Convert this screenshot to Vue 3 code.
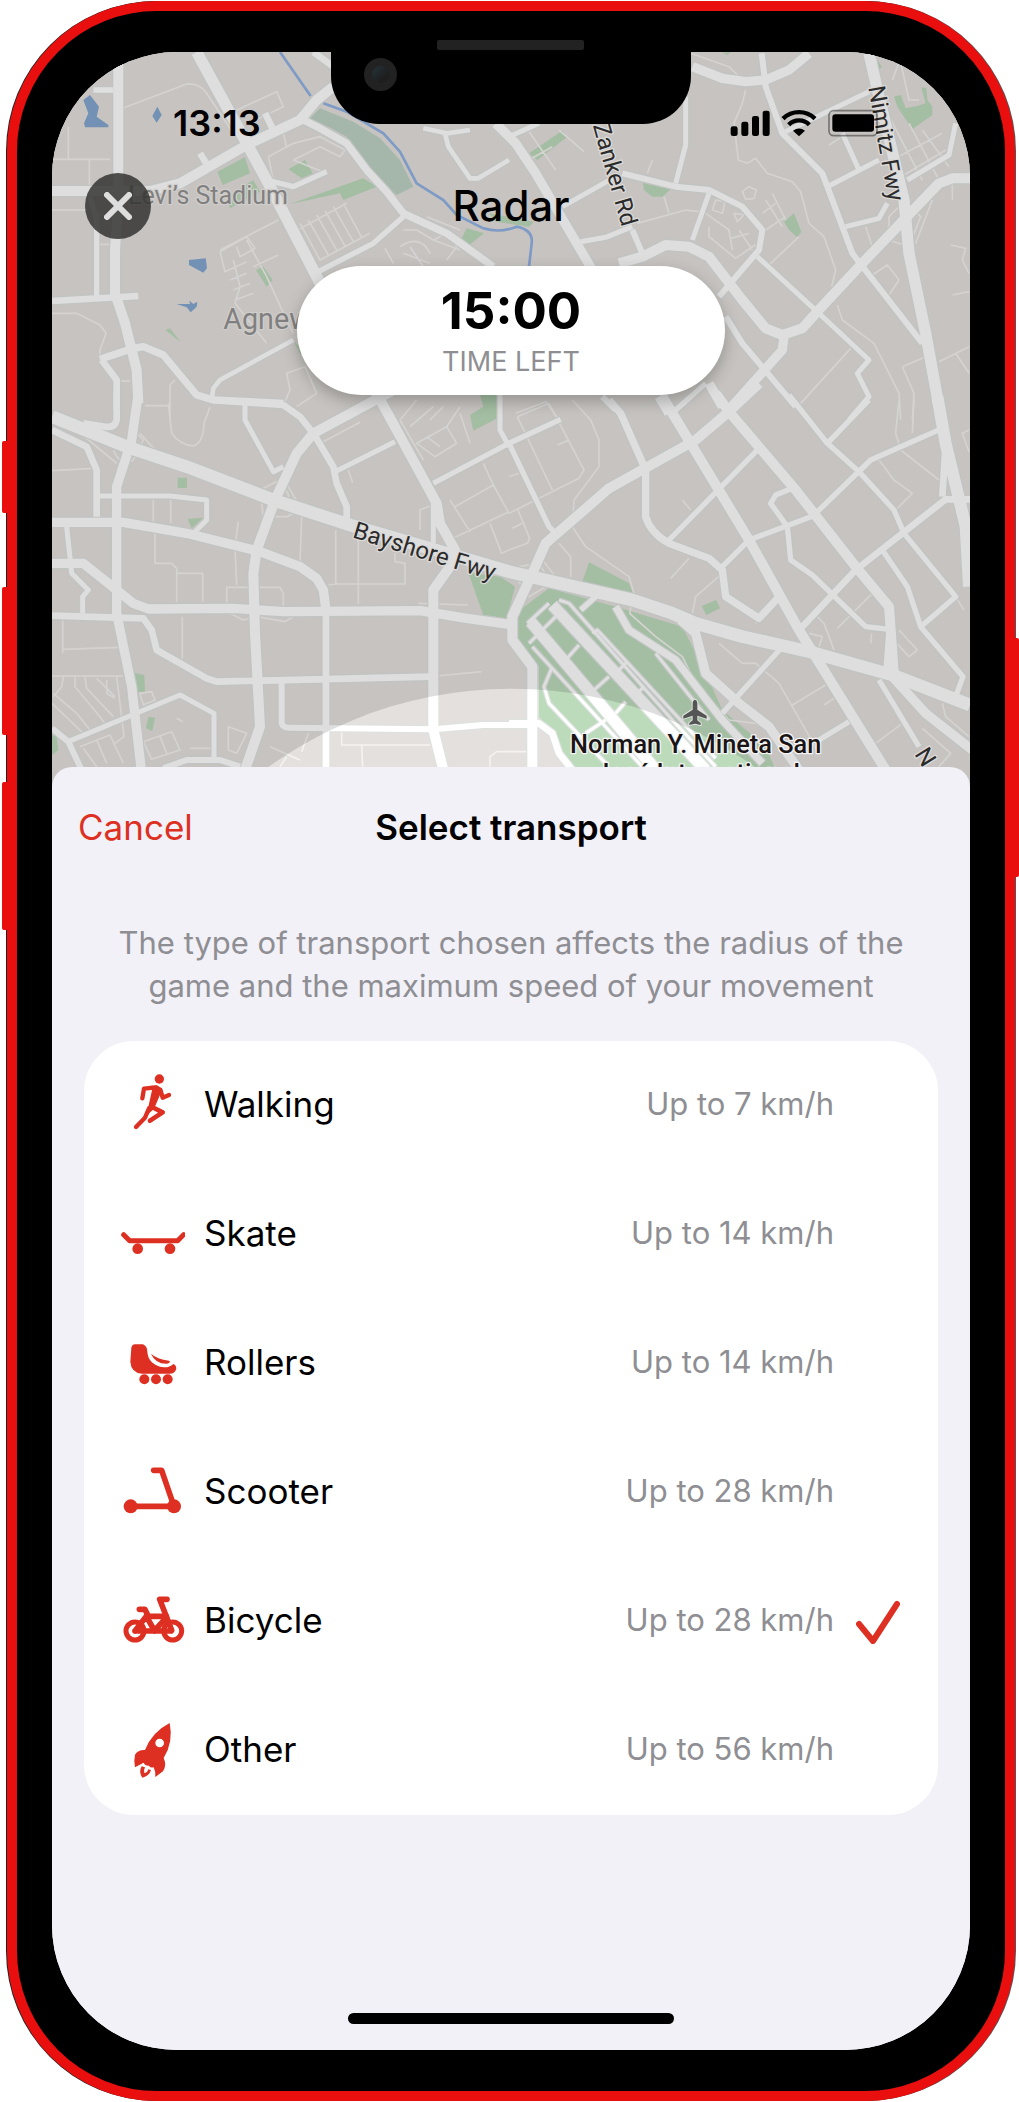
<script setup>
import { ref } from 'vue'

const selected = ref('bicycle')

const transports = [
  { id: 'walking', name: 'Walking', speed: 'Up to 7 km/h', box: '56 72 198 198' },
  { id: 'skate', name: 'Skate', speed: 'Up to 14 km/h', box: '56 457 198 198' },
  { id: 'rollers', name: 'Rollers', speed: 'Up to 14 km/h', box: '56 843 198 198' },
  { id: 'scooter', name: 'Scooter', speed: 'Up to 28 km/h', box: '56 88 198 198' },
  { id: 'bicycle', name: 'Bicycle', speed: 'Up to 28 km/h', box: '56 474 198 198' },
  { id: 'other', name: 'Other', speed: 'Up to 56 km/h', box: '56 858 198 198' },
]

// The map is kept in four tiles; roads are [width, path] pairs.
const tiles = [
  {
    at: 'translate(0 0)',
    parks: 'M652 515L735 472L750 520L668 555ZM865 508L915 480L938 520L905 535ZM680 590L760 540L780 575L690 625ZM870 612L1090 535L1130 560L1030 600L1020 580ZM768 810L790 800L818 840L800 860ZM497 990L510 985L542 1027ZM1385 715L1400 685L1452 700L1408 735ZM882 1025L910 1050L902 1066Z',
    minor: 'M205 380V478M156 478H330M268 478V560M156 630H260M372 323L560 252Q600 250 620 280L700 400M700 335L830 275L850 320L745 370M156 940H230L300 975L318 1000L300 1050V1070M660 755L740 710L765 745L720 770L710 740M660 755L675 815L740 785M690 840L740 820M700 870L750 850M705 900L760 880M740 720L800 830L860 960L880 1000M700 780L720 860L705 910L800 1030M760 800L835 765M660 750L835 660M875 700L1040 610M900 670L960 780L1110 700M925 660L985 765M950 645L1010 750M975 632L1035 738M1000 620L1060 725M1030 610L1085 712M865 680L920 770M805 470L880 430L960 410L1035 450L1020 470L960 440L880 480M805 470L820 540M850 400L860 440M880 480L980 520M1155 745L1180 790M1210 690L1250 690L1300 720L1380 750M1200 740Q1260 700 1290 760M1210 760L1290 790M1230 740L1270 800M1300 720L1340 700L1370 740L1340 780M1280 650L1380 690M510 1260V1155L525 1140M360 1143H390M435 1217H510M860 1120L915 1100L950 1180L890 1220M860 1120L870 1170L855 1205M300 733H330',
    roads: [
      [32, 'M590 156L740 430L800 540L945 820L1140 1200'],
      [28, 'M355 190V600L345 750V880L375 970L410 1110L415 1210'],
      [28, 'M156 573H450L540 550L740 435L900 360L950 300L1000 260'],
      [20, 'M900 355L960 385L1040 430L1100 510L1160 575L1210 640L1340 700L1480 800'],
      [14, 'M1210 650L1120 730L945 820M800 540L880 560L980 515M280 270H340M290 640V900M270 590L290 660'],
      [18, 'M940 156L1000 200M600 460L625 500M795 340L820 390M156 903L415 888M305 1080L350 1140V1230'],
      [20, 'M300 1078L400 1045L430 1040L490 1065L590 1185L640 1200L850 1210'],
      [12, 'M880 1020L660 1140L640 1165L635 1200M1270 385L1340 400L1410 390M1335 400L1345 440L1410 535H1435L1527 480'],
    ],
  },
  {
    at: 'translate(1527 0)',
    parks: 'M60 460L160 392L175 410L85 480ZM402 548L485 568L460 590H430L405 570ZM825 665L855 640L877 695L865 712L840 690ZM1155 290L1175 285L1190 325L1225 318L1250 310L1237 262L1252 265L1255 300L1270 320V345L1210 388L1165 320ZM-60 640L75 665L60 680L-40 665ZM1105 180L1118 200L1110 210ZM640 158L665 156L655 165Z',
    minor: 'M710 270L700 310L675 370L688 480L715 490L740 475L775 520L850 545L875 575L900 670L945 710L980 810L968 860M985 915L1000 960L1095 1030L1170 1180L1175 1260M610 630L620 600L648 605L640 640ZM700 575L720 560L742 570L735 595L710 598ZM675 640L705 645L685 665ZM590 640L660 690L670 750M600 680V710L680 775L760 720M690 690L730 750M665 715L720 700M770 600L820 680M790 580L830 660M760 640L800 610M770 690L830 650M780 795L870 710M875 1210L1025 1045M1180 1100L1250 1070M1180 1100L1215 1180L1210 1260M1090 825L1135 795L1170 840L1140 885L1110 860M1325 735L1370 745L1360 780L1380 820M1330 885L1380 875M1290 1085L1380 1040M1340 1060L1380 1120M1170 165L1200 300L1230 300M1150 240L1180 160M1130 330L1240 540M1200 370L1290 540M1240 390L1320 500M1150 480L1300 400M1160 540L1310 450M50 380L140 510M150 390L225 455M60 480L130 440M480 640L465 590M385 670L530 630L570 635M415 520L430 480M545 160L660 200L690 230M1070 680L1090 740M1190 600L1140 650V720L1200 740L1235 650L1190 600M1150 680L1220 640M1270 600L1220 730M1330 540V600M960 435L1000 410M20 1240L110 1205L150 1260',
    roads: [
      [26, 'M-40 370L20 430L80 520L250 810M550 200L640 235L710 245L770 240L840 210L900 160'],
      [32, 'M1080 160L1110 290L1185 600L1200 760L1250 1000L1290 1220'],
      [28, 'M1390 535H1330L1290 550L1050 800L920 940L880 985L820 1005L770 985L700 900L600 770L540 740L470 735L400 770L330 790'],
      [26, 'M825 1010L820 1050L650 1240M600 1150L640 1220M450 1190L480 1240'],
      [16, 'M758 160L770 260L820 400L940 520L1000 680L1030 760L1240 1030M340 520L500 560L600 570L700 620L760 690L750 750L630 890M650 950L700 1030L860 1220M280 1190L320 1230M370 690L400 760'],
      [13, 'M820 400L1080 275M1000 400L1050 510M955 560L1110 480M530 290V435L500 550M600 580L550 720M215 725L290 712L370 680M160 620L320 530M745 770L930 940L1080 1080L1045 1120L1080 1190L1020 1260M1010 680L1110 655L1135 610M1195 540L1320 465L1340 370M590 1150L500 1230M0 410L90 370'],
    ],
  },
  {
    at: 'translate(0 1200)',
    parks: 'M1410 45L1450 20L1440 -15H1495L1492 55L1420 92ZM533 233H561V264H533ZM563 357L610 353L575 385ZM1405 518L1500 530L1545 560L1520 655L1450 645ZM402 818L433 825L435 875H410ZM445 950L465 953L457 993L438 985ZM156 1005L170 1010L175 1050L156 1065Z',
    minor: 'M505 10L515 100Q540 135 580 138Q610 130 612 70L630 20M156 212L280 205M460 300V375M512 300V370M465 400V490H515L530 505V605M530 520H608V605M715 365L705 440L710 555M905 350L900 485M1007 390V552M1075 420V612M985 555L1010 552H1215V490L1185 485V460M680 610V562H840L850 580V630M690 640L730 660L770 650L855 665L880 650M547 650V785M188 660V760M188 748L360 742M970 125L1080 67M1045 210L1058 248M1260 390V330L1290 318M1350 300L1410 395M1365 320L1480 255L1450 190M1480 255L1527 340M1365 412L1527 335M1470 370L1505 460L1527 450M1255 610L1405 615M1310 828L1445 815M156 828H370M190 830L185 860L160 890M225 830V860L300 950L325 985M255 830L260 865L340 950M290 835L345 890M350 830L372 1010L345 1030M320 840V880L345 895M160 880L230 940L270 990M156 910L250 1000M420 880L455 875L465 900L430 915ZM430 1025L515 995L540 1050L455 1078ZM480 1010L500 1060M240 1040L330 1005L370 1090M250 1045L290 1100M290 1020L320 1090M685 980L740 1000L710 1060L685 1050ZM530 955L548 965M570 1045H640M810 1040L900 1080M860 1070L840 1100M925 1000L905 1055M1025 995V1035H1290M1085 1035L1088 1100M1470 1100V1070L1490 1055H1580M1200 60L1250 0M1230 80L1300 20M1250 130L1340 80L1370 130L1305 170ZM1280 110L1320 140M1290 60L1330 20M1340 80L1380 20M1380 40L1410 130M1200 60L1270 180M340 150Q360 200 400 180L430 120L400 90M420 100L475 160M230 90L350 190M780 270L850 235L900 320M780 270L790 350L860 350L900 330M800 320Q820 350 840 320M840 260Q870 270 865 300',
    roads: [
      [26, 'M415 -20L395 120L350 260V640L395 860L425 1120M156 367H370L560 400L780 455L900 500L950 535L970 570L978 630M156 490H250L350 570L400 610L445 627L700 625L850 635L1260 632L1400 655L1540 675'],
      [28, 'M1130 -20L1310 310L1320 370L1365 450L1350 500L1300 570V990L1330 1110M1200 -40L940 100L890 160L825 300L770 450L760 520L765 700L780 980L735 1110'],
      [18, 'M640 0L850 15L900 50L940 100L1000 200L1010 250L1040 320V370M350 -20V60Q345 85 315 80L250 70M156 90L260 140L290 210V350M156 647L430 655L455 690L470 750L620 835L650 845L1290 830M978 630V1110'],
      [13, 'M735 10V60L820 215L850 200M1005 215L1185 125M1300 250L1527 130M300 288H510L620 300V360L585 395M200 380L215 520L265 570L248 590V640M205 1025L540 885L642 940V1075M1300 300V430M1500 -20V90L1527 140'],
      [16, 'M845 845V970Q850 985 870 983L1300 988L1450 975H1600M156 985L205 1025L245 1110M490 1105L560 1080H660L720 1100'],
      [36, 'M156 50L380 140L560 200L820 300L1050 375L1527 515L1897 600L2017 640L2087 670L2227 710L2427 755L2677 825L2910 915'],
    ],
  },
  {
    at: 'translate(1527 1200)',
    parks: 'M120 565L20 640L25 720L90 800V950L130 1000L180 1110H800L770 1040L640 930L590 820L560 760L520 680L320 620ZM240 487L360 550L372 580L220 545ZM578 618L622 600L633 625L592 645Z',
    minor: 'M190 0L245 60L270 120V200L195 300L190 380L230 440L360 530L375 580L362 640L440 710L520 770L560 850L660 960L740 970L790 1000M25 50L120 10L225 210L210 235L0 340M25 50L130 270M145 135L180 120M0 230L30 220M25 325L62 415L55 430L0 450M10 385L40 370M520 300L545 330M485 535L540 475M1170 0L1160 100L1175 150L1290 240M1110 180L1155 240L1210 280L1160 330M1215 0L1210 100M1380 155L1360 100L1380 90M630 730L700 790H740L810 850L930 1060M850 915L950 855M945 915L975 895M1090 580L985 685M1340 590L1365 630M1170 690L1225 750L1200 770L1145 710M1300 910L1310 950L1380 1010M1100 1030L1180 970M1240 985L1325 1060L1290 1100M915 640L945 670L975 750M640 520L560 590L550 640M1085 730L1088 700M150 430L185 470V530M740 670L750 650M20 530L60 590L110 560L140 530L100 480M30 500L90 490L120 540M900 700L940 710L930 740',
    roads: [
      [28, 'M620 -20L660 35L860 270L1040 500L1140 620L1155 830M460 -10L545 130L720 420L870 690L1130 1110M750 -50L660 35L560 120L300 265L110 430L70 520L10 650V720L70 800V1110'],
      [20, 'M300 0L335 40L410 210V350Q425 400 480 430L600 475L640 510L650 590L750 655L810 590M320 620L360 690L500 780L640 960L760 1090'],
      [34, 'M1285 -10L1310 130L1370 380L1380 560'],
      [26, 'M515 660L560 700L590 820L690 910L780 980L870 1110M1150 830L1250 940L1390 1050'],
      [14, 'M840 -15L955 130L1050 215L1155 330L1185 400L1340 590L1235 680L1195 560L1120 450M1235 680L1362 830L1340 890M1080 0L955 130M1300 85L1085 180L920 340M0 130L120 380L140 400M0 130L155 58M480 420L750 145M640 500L720 420L920 345M850 265L800 285L785 310L835 380L845 480L910 525L1070 680L1140 688M820 740L640 940M1110 840L1230 1040M930 1020L1020 965M500 30L545 -10M1130 820L1140 690M215 630L260 590'],
      [18, 'M1390 298H1310L1040 510L880 680M0 970H90L130 1000L150 1060L190 1110M1310 130L1300 290'],
      [32, 'M65 665L440 1110M130 615L590 1110'],
      [7, 'M70 740L400 1100M60 730L90 700M150 600L180 610L490 960L620 1100M250 700L265 690L620 1075M100 690L140 650M170 780L210 735M255 870L300 830M320 940L350 905M55 670L120 610M130 800L105 860L120 910L290 1090M230 1000L290 960M330 810L355 785M385 880L405 860M440 760L600 960'],
    ],
  },
]
</script>

<template>
  <main class="phone">
    <span class="key key-mute"></span>
    <span class="key key-up"></span>
    <span class="key key-down"></span>
    <span class="key key-power"></span>

    <div class="notch">
      <span class="speaker"></span>
      <span class="camera"></span>
    </div>

    <div class="screen">
      <section class="radar">
        <svg class="map" viewBox="156 156 2754 2205" preserveAspectRatio="xMidYMin slice" role="img" aria-label="Map of San Jose">
          <rect x="0" y="0" width="3060" height="2500" fill="#e4e0dd" />
          <g v-for="t in tiles" :key="'p' + t.at" :transform="t.at">
            <path :d="t.parks" fill="#bcdbbb" />
          </g>
          <path fill="#bed3c5" d="M925 360L960 325L1060 365L1140 415L1200 480L1240 560L1190 585L1110 520L1040 410L985 380Z" />
          <path fill="#84a7d0" d="M250 300L270 285L297 320L290 350L325 375V382H255L252 370L265 340ZM472 320L485 345L470 368L457 348ZM567 780L617 775L621 805L610 818L567 795ZM530 912L570 912L568 902L580 912L592 905L590 920L572 937L560 922Z" />
          <path fill="none" stroke="#91b2e4" stroke-width="8" d="M840 156L932 288M970 310L1040 335L1150 400L1200 455L1250 550L1330 600L1370 645L1450 685Q1500 700 1550 680Q1600 690 1595 730L1587 800" />
          <g class="lines">
            <g v-for="t in tiles" :key="'m' + t.at" :transform="t.at">
              <path :d="t.minor" stroke="#f5f3f0" stroke-width="5" />
            </g>
            <g v-for="t in tiles" :key="'c' + t.at" :transform="t.at">
              <path v-for="r in t.roads" :key="r[1]" :d="r[1]" stroke="#dde2e0" :stroke-width="r[0] + 9" />
            </g>
            <g v-for="t in tiles" :key="'r' + t.at" :transform="t.at">
              <path v-for="r in t.roads" :key="r[1]" :d="r[1]" stroke="#ffffff" :stroke-width="r[0] + 2" />
            </g>
          </g>
          <path fill="#000" fill-opacity=".13" fill-rule="evenodd" d="M0 0H3060V2500H0ZM284 3317a1251 1251 0 1 0 2502 0a1251 1251 0 1 0 -2502 0Z" />
          <g class="place">
            <text x="384" y="612" font-size="75">Levi’s Stadium</text>
            <text x="670" y="986" font-size="86">Agnew</text>
          </g>
          <g class="street">
            <text transform="translate(1778 376) rotate(74)" font-size="71">Zanker Rd</text>
            <text transform="translate(2605 262) rotate(80)" font-size="71">Nimitz Fwy</text>
            <text transform="translate(1055 1612) rotate(17)" font-size="72">Bayshore Fwy</text>
            <text transform="translate(2742 2262) rotate(58)" font-size="72">N</text>
          </g>
          <path class="plane" d="M2085 2099q7 2 7 12v18l28 18v9l-28 -9v14l10 8v6l-17 -4l-17 4v-6l10 -8v-14l-28 9v-9l28 -18v-18q0 -10 7 -12Z" />
          <g class="airport">
            <text x="2087" y="2260" font-size="76">Norman Y. Mineta San</text>
            <text x="2093" y="2345" font-size="76">José International</text>
          </g>
        </svg>

        <div class="status">
          <time>13:13</time>
          <svg width="148" height="28" viewBox="664 328 444 84" aria-label="Signal, Wi-Fi, battery">
            <rect x="666" y="380" width="21" height="29" rx="7" />
            <rect x="698" y="366" width="21" height="43" rx="7" />
            <rect x="730" y="349" width="21" height="60" rx="7" />
            <rect x="762" y="333" width="21" height="76" rx="7" />
            <path d="M823 357A69 69 0 0 1 919 357M840 375A44 44 0 0 1 902 375" fill="none" stroke="#000" stroke-width="13" />
            <path d="M853 393Q871 380 889 393L871 410Z" />
            <rect x="961" y="333" width="144" height="75" rx="14" fill="none" stroke="#000" stroke-opacity=".4" stroke-width="5" />
            <rect x="971" y="344" width="125" height="52" rx="9" />
          </svg>
        </div>

        <header class="title">
          <button class="close" type="button" aria-label="Close">
            <svg width="28" height="28" viewBox="0 0 28 28"><path d="M3 3L25 25M25 3L3 25" /></svg>
          </button>
          <h1>Radar</h1>
        </header>

        <div class="timer">
          <strong>15:00</strong>
          <span>TIME LEFT</span>
        </div>
      </section>

      <section class="sheet">
        <header class="bar">
          <button type="button" class="cancel">Cancel</button>
          <h2>Select transport</h2>
        </header>
        <p class="hint">The type of transport chosen affects the radius of the game and the maximum speed of your movement</p>

        <div class="list" role="radiogroup" aria-label="Select transport">
          <label v-for="t in transports" :key="t.id" class="row" :for="t.id">
            <svg class="icon" width="66" height="66" :viewBox="t.box" aria-hidden="true">
              <g v-if="t.id === 'walking'">
                <circle cx="177" cy="90" r="14" />
                <path class="s" stroke-width="13" d="M126 148L131 119L168 115M146 178L134 206L107 234M180 122L187 146L206 138" />
                <path class="s" stroke-width="14" d="M155 174L187 190L149 215" />
                <path d="M150 110H170Q184 114 184 126L166 168L158 182L138 200L146 164L155 124Z" />
              </g>
              <g v-else-if="t.id === 'skate'">
                <path class="s" stroke-width="15" d="M70 555L88 573H232L250 555" />
                <circle cx="112" cy="597" r="16" /><circle cx="209" cy="597" r="16" />
              </g>
              <g v-else-if="t.id === 'rollers'">
                <path d="M104 883H128Q141 889 141 905Q144 945 190 952Q207 953 219 942Q228 946 228 956Q224 971 208 971H125Q92 968 90 935L93 893Q95 884 104 883Z" />
                <path d="M152 911Q170 927 206 932Q214 937 200 941Q165 942 152 911Z" />
                <circle cx="132" cy="988" r="15" /><circle cx="167" cy="988" r="15" /><circle cx="202" cy="988" r="15" />
              </g>
              <g v-else-if="t.id === 'scooter'">
                <path class="s" stroke-width="17" d="M91 227H221L184 119H160" />
                <circle cx="91" cy="227" r="21" /><circle cx="221" cy="227" r="21" />
              </g>
              <g v-else-if="t.id === 'bicycle'">
                <circle class="s" stroke-width="15" cx="104" cy="600" r="27" />
                <circle class="s" stroke-width="15" cx="217" cy="600" r="27" />
                <path class="s" stroke-width="17" d="M117 535H134L142 552M178 505H200M178 505L214 598" />
                <path class="s" stroke-width="17" d="M104 600L138 556H198M138 556L163 600M104 600H212M163 598L198 560" />
              </g>
              <g v-else>
                <path fill-rule="evenodd" d="M208 873Q220 930 190 978Q200 1000 188 1018L165 1035Q166 1018 160 1006Q150 1009 146 1001Q134 1002 130 992L104 1006Q100 985 104 968Q112 953 134 954Q155 900 208 873ZM165 933a13 13 0 1 0 26 0a13 13 0 1 0 -26 0Z" />
                <path d="M124 1003Q114 1020 126 1037Q147 1032 152 1014L144 1012Q141 1023 132 1023Q130 1013 134 1006Z" />
              </g>
            </svg>
            <span class="name">{{ t.name }}</span>
            <span class="speed">{{ t.speed }}</span>
            <span class="tick">
              <input :id="t.id" v-model="selected" type="radio" name="transport" :value="t.id" />
              <svg v-if="selected === t.id" width="44" height="44" viewBox="0 0 44 44" aria-hidden="true"><path d="M3 24L17 41L41 4" /></svg>
            </span>
          </label>
        </div>
        <span class="home"></span>
      </section>
    </div>
  </main>
</template>

<style>
body {
  background: #fff;
}
</style>

<style scoped>
* {
  box-sizing: border-box;
}
.phone {
  position: relative;
  margin: 1px 4px 1px 7px;
  padding: 41px 35px;
  border: 10px solid #ea0f0f;
  border-radius: 150px;
  background: #000;
  box-shadow: -1px 0 #222, 1px 0 #555;
  font-family: Inter, 'Liberation Sans', sans-serif;
  color: #000;
}
.key {
  position: absolute;
  left: -15px;
  width: 10px;
  border-radius: 2px;
  background: #ea0f0f;
}
.key-mute { top: 430px; height: 72px; }
.key-up { top: 576px; height: 148px; }
.key-down { top: 771px; height: 148px; }
.key-power { top: 627px; left: auto; right: -14px; height: 239px; }
.notch {
  position: absolute;
  z-index: 2;
  top: 0;
  left: 50%;
  width: 360px;
  height: 113px;
  margin-left: -180px;
  border-radius: 0 0 48px 48px;
  background: #000;
}
.speaker {
  position: absolute;
  top: 29px;
  left: 106px;
  width: 147px;
  height: 10px;
  border-radius: 2px;
  background: #222;
}
.camera {
  position: absolute;
  top: 47px;
  left: 33px;
  width: 33px;
  height: 33px;
  border: 8px solid #222;
  border-radius: 50%;
  background: linear-gradient(135deg, #24343b, #1e1e1e 70%);
}
.screen {
  border-radius: 125px;
  overflow: hidden;
  background: #f2f1f7;
}
.radar {
  position: relative;
  display: flex;
  flex-direction: column;
  align-items: stretch;
  min-height: 735px;
  padding-top: 48px;
}
.map {
  position: absolute;
  inset: 0;
  width: 100%;
  height: 100%;
  font-family: Roboto, 'Liberation Sans', sans-serif;
}
.lines path {
  fill: none;
  stroke-linejoin: round;
}
.map text {
  paint-order: stroke;
  stroke-linejoin: round;
  stroke-width: 8px;
}
.place { fill: #808080; stroke: #d0cdcb; }
.street { fill: #2b2b2b; stroke: #dcdad8; }
.airport { fill: #1a1414; stroke: #f4f4f4; font-weight: 500; text-anchor: middle; }
.plane { fill: #555; stroke: #dfe5df; stroke-width: 6px; paint-order: stroke; }
.status {
  position: relative;
  display: flex;
  align-items: center;
  justify-content: space-between;
  height: 46px;
  padding: 0 92px 0 121px;
}
.status time {
  font-size: 36px;
  font-weight: 600;
}
.title {
  position: relative;
  display: grid;
  grid-template-columns: 1fr auto 1fr;
  align-items: center;
  margin-top: 27px;
  padding: 0 33px;
}
.close {
  display: flex;
  align-items: center;
  justify-content: center;
  width: 66px;
  height: 66px;
  padding: 0;
  border: 0;
  border-radius: 50%;
  background: rgba(50, 50, 48, .84);
}
.close path {
  fill: none;
  stroke: #dedede;
  stroke-width: 6;
  stroke-linecap: round;
}
h1 {
  margin: 0;
  font-size: 42px;
  font-weight: 500;
  line-height: 66px;
}
.timer {
  position: relative;
  display: flex;
  flex-direction: column;
  align-items: center;
  align-self: center;
  width: 428px;
  margin-top: 27px;
  padding: 15px 0 12px;
  border-radius: 65px;
  background: #fff;
  box-shadow: 0 6px 16px rgba(0, 0, 0, .25);
}
.timer strong {
  font-size: 51px;
  font-weight: 700;
  line-height: 60px;
}
.timer span {
  font-size: 27px;
  line-height: 42px;
  color: #8e8e93;
}
.sheet {
  position: relative;
  display: flex;
  flex-direction: column;
  margin-top: -20px;
  padding: 30px 32px 26px;
  border-radius: 20px 20px 0 0;
  background: #f2f1f7;
}
.bar {
  display: grid;
  grid-template-columns: 1fr auto 1fr;
  align-items: center;
}
.cancel {
  justify-self: start;
  margin-left: -6px;
  padding: 0;
  border: 0;
  background: none;
  font: inherit;
  font-size: 35px;
  color: #de3022;
}
h2 {
  margin: 0;
  font-size: 35px;
  font-weight: 600;
  line-height: 60px;
}
.hint {
  align-self: center;
  max-width: 810px;
  margin: 64px 0 34px;
  font-size: 31px;
  line-height: 43px;
  text-align: center;
  color: #8e8e93;
}
.list {
  border-radius: 50px;
  background: #fff;
}
.row {
  display: flex;
  align-items: center;
  height: 129px;
  padding: 0 38px 0 35px;
}
.icon {
  flex: none;
  fill: #de3022;
}
.s {
  fill: none;
  stroke: #de3022;
  stroke-linecap: round;
  stroke-linejoin: round;
}
.name,
.speed {
  padding-bottom: 4px;
}
.name {
  flex: 1;
  margin-left: 19px;
  font-size: 35px;
}
.speed {
  font-size: 31px;
  color: #8e8e93;
}
.tick {
  position: relative;
  flex: none;
  width: 44px;
  height: 44px;
  margin-left: 22px;
}
.tick input {
  position: absolute;
  inset: 0;
  width: 100%;
  height: 100%;
  margin: 0;
  opacity: 0;
}
.tick path {
  fill: none;
  stroke: #de3022;
  stroke-width: 6;
  stroke-linecap: round;
  stroke-linejoin: round;
}
.home {
  align-self: center;
  width: 326px;
  height: 11px;
  margin-top: 198px;
  border-radius: 6px;
  background: #000;
}
</style>
